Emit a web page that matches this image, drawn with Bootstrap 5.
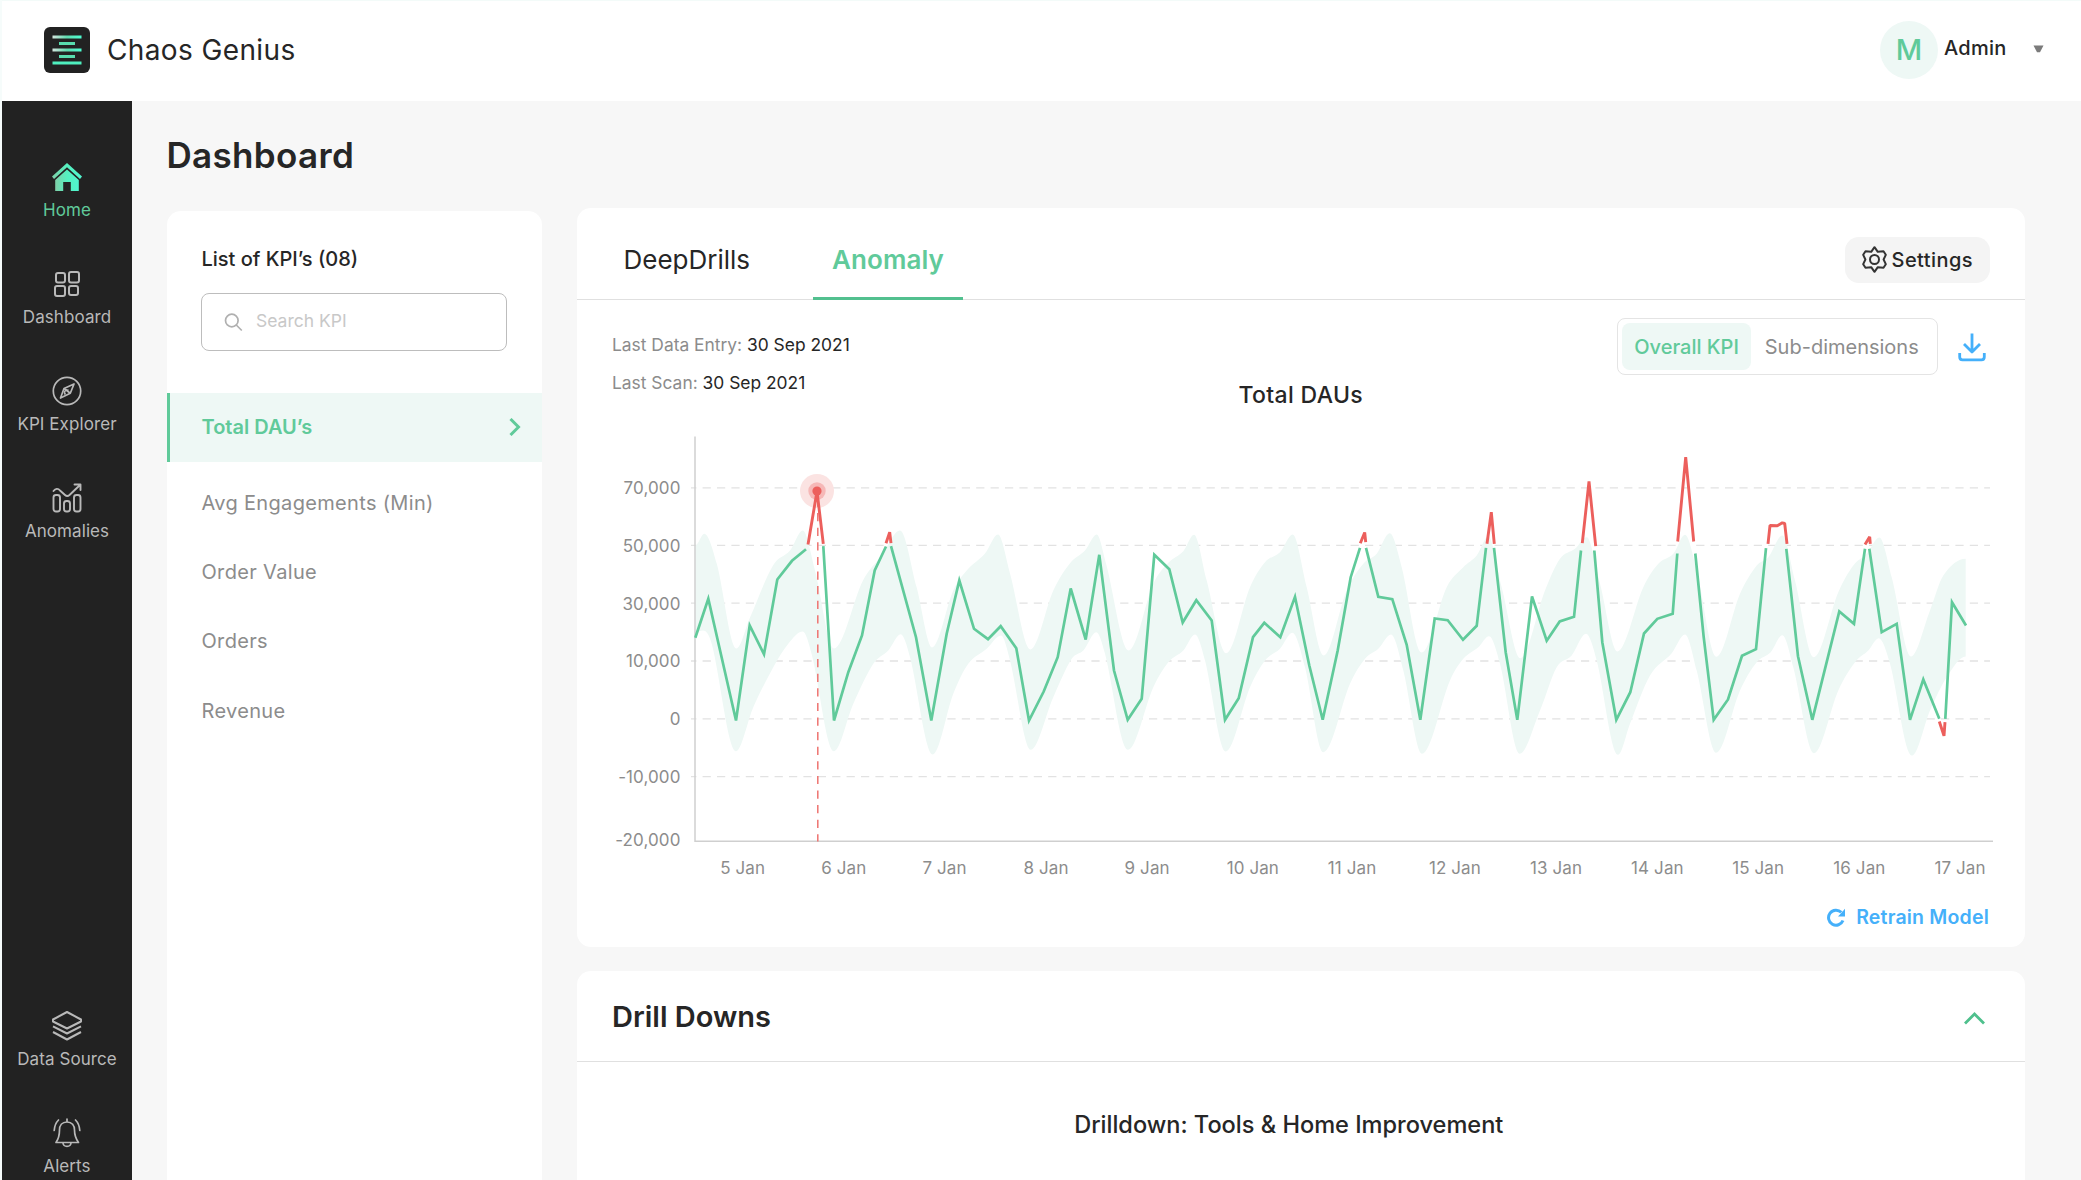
<!DOCTYPE html>
<html lang="en">
<head>
<meta charset="utf-8">
<meta name="viewport" content="width=device-width, initial-scale=1">
<title>Chaos Genius</title>
<link href="https://cdn.jsdelivr.net/npm/bootstrap@5.3.0/dist/css/bootstrap.min.css" rel="stylesheet">
<style>
  :root { --cg-green:#60ca9a; --cg-mint:#eef8f5; --cg-ink:#262626; --cg-gray:#8c8c8c; --cg-blue:#45b0fa; --cg-line:#e0e0e0; }
  body { font-family: Inter, "Liberation Sans", sans-serif; background:#f7f7f7; color:var(--cg-ink); height:1180px; overflow:hidden; border-left:2px solid #f6fcfb; }
  svg { display:block; flex:none; }
  .topbar { height:101px; padding:0 37px 2px 42px; border-top:1px solid #f3fbf9; }
  .brand-name { font-size:28px; line-height:36px; margin-left:17px; letter-spacing:.38px; }
  .avatar { width:58px; height:58px; background:var(--cg-mint); color:var(--cg-green); font-size:29px; font-weight:500; }
  .user-name { font-size:20px; line-height:24px; font-weight:500; margin-left:6px; margin-bottom:4px; letter-spacing:.25px; }
  .user-caret { margin-left:26.5px; margin-bottom:3px; }
  .shell { height:1079px; }
  .sidebar { width:130px; background:#222; padding:61px 0 2px; }
  .side-group { gap:47px; }
  .side-link { color:#b9b9b9; text-decoration:none; font-size:17px; line-height:24px; gap:6px; white-space:nowrap; letter-spacing:.08px; }
  .side-link.active { color:var(--cg-green); }
  .content { padding:33.5px 56.5px 0 34.5px; min-width:0; }
  .page-title { font-size:35px; line-height:40px; font-weight:600; margin:0 0 33px; letter-spacing:.33px; }
  .columns { gap:35px; height:972px; }
  .panel { background:#fff; border-radius:14px; }
  .kpi-panel { width:375.5px; margin-top:3px; padding-top:36px; flex:none; }
  .kpi-title { font-size:20px; line-height:24px; font-weight:500; margin:0 35px; }
  .kpi-search { margin:22.5px 35px 41.8px 34.5px; height:58px; border:1.5px solid #bdbdbd; border-radius:8px; padding:0 22px; color:#c4c4c4; font-size:17.5px; gap:13px; }
  .kpi-search input { border:0; outline:0; padding:0 0 1px; width:220px; background:none; font-size:inherit; color:inherit; }
  .kpi-search input::placeholder { color:#c8c8c8; opacity:1; }
  .kpi-item { height:69.3px; padding:0 21px 0 35px; font-size:20px; color:var(--cg-gray); text-decoration:none; letter-spacing:.33px; }
  .kpi-item.active { background:var(--cg-mint); color:var(--cg-green); font-weight:600; border-left:3px solid var(--cg-green); padding-left:32px; margin-bottom:6px; letter-spacing:0; }
  .main-col { width:1447.5px; gap:23.5px; flex:none; }
  .tabs { height:92.5px; border-bottom:1px solid var(--cg-line); padding:0 35px 0 27.5px; }
  .tab { font-size:26px; line-height:32px; padding:36.5px 19px 0; height:92.5px; color:var(--cg-ink); text-decoration:none; text-align:center; }
  .tab.active { color:var(--cg-green); font-weight:600; border-bottom:3px solid #52c08f; margin-left:44px; letter-spacing:.08px; }
  .btn-settings, .btn-settings:hover { height:46px; width:144.5px; background:#f4f4f4; border-radius:14px; font-size:20px; font-weight:500; padding:0; gap:5px; margin-top:13px; color:var(--cg-ink); letter-spacing:.42px; }
  .meta { padding:18px 35px 0; height:108.5px; }
  .meta-side { flex:1 1 0; min-width:0; }
  .scan-info { font-size:17.4px; line-height:37.5px; padding-top:8px; color:var(--cg-gray); white-space:nowrap; }
  .scan-info b { font-weight:400; color:var(--cg-ink); }
  .chart-title { font-size:23px; line-height:28px; font-weight:500; margin:0; letter-spacing:.35px; }
  .segmented { height:57px; width:320.5px; border:1.5px solid #e4e4e4; border-radius:8px; padding:4px; font-size:20px; color:var(--cg-gray); }
  .segmented .on { background:var(--cg-mint); color:var(--cg-green); border-radius:8px; height:47px; width:129px; font-weight:500; }
  .segmented .off { flex:1; }
  .download { margin:15px 3.5px 0 20.5px; }
  .retrain { color:var(--cg-blue); font-size:19.5px; line-height:24px; font-weight:600; padding:15px 35.5px 18px; gap:11px; letter-spacing:.2px; }
  .drill-head { height:91.5px; border-bottom:1px solid var(--cg-line); padding:2px 40px 0 35px; }
  .drill-head svg { margin-top:3px; }
  .drill-title { font-size:29px; line-height:36px; font-weight:600; margin:0; }
  .drill-sub { font-size:23.55px; line-height:28px; font-weight:500; padding:49px 24px 0 0; text-align:center; margin:0; }
  .axis-label { font-size:17px; fill:#8c8c8c; letter-spacing:.1px; }
</style>
</head>
<body>
<header class="topbar bg-white d-flex align-items-center">
  <svg width="46" height="46" viewBox="0 0 46 46">
    <defs>
      <linearGradient id="gBar" x1="0" x2="1"><stop offset="0" stop-color="#d5e5de"/><stop offset=".5" stop-color="#5fdcb0"/><stop offset="1" stop-color="#4dffd2"/></linearGradient>
      <linearGradient id="gHome" x1="0" x2="1"><stop offset="0" stop-color="#7fcfa8"/><stop offset=".5" stop-color="#55f0bf"/><stop offset="1" stop-color="#50f5d0"/></linearGradient>
    </defs>
    <rect width="46" height="46" rx="6" fill="#222"/>
    <rect x="8.5" y="8.5" width="29" height="3" fill="url(#gBar)"/>
    <rect x="15" y="15" width="16" height="3" fill="#58dcae"/>
    <rect x="8.5" y="21.5" width="29" height="3" fill="url(#gBar)"/>
    <rect x="15" y="28" width="16" height="3" fill="#58dcae"/>
    <rect x="8.5" y="34.5" width="29" height="3" fill="#4ff0bf"/>
  </svg>
  <span class="brand-name">Chaos Genius</span>
  <div class="ms-auto d-flex align-items-center">
    <span class="avatar rounded-circle d-flex align-items-center justify-content-center">M</span>
    <span class="user-name">Admin</span>
    <svg class="user-caret" width="11" height="8" viewBox="0 0 11 8"><path d="M.5.5h10L7 7.2H4z" fill="#7b7b7b"/></svg>
  </div>
</header>

<div class="shell d-flex">
  <nav class="sidebar d-flex flex-column flex-shrink-0">
    <div class="side-group d-flex flex-column">
      <a class="side-link active d-flex flex-column align-items-center" href="#">
        <svg width="32" height="30" viewBox="0 0 32 30" fill="url(#gHome)"><path d="M16 1 31 14.5 29 17 16 5.300 3 17 1 14.500z"/><path d="M16 7.500 27.800 18v11h-8V20h-7.600v9h-8V18z"/></svg>
        <span>Home</span></a>
      <a class="side-link d-flex flex-column align-items-center" href="#">
        <svg width="30" height="30" viewBox="0 0 30 30" fill="none" stroke="#b9b9b9" stroke-width="2"><rect x="4" y="4" width="9" height="9.500" rx="2"/><rect x="17" y="3" width="10" height="10.500" rx="2"/><rect x="3" y="17" width="10" height="10" rx="2"/><rect x="17" y="17" width="9" height="9" rx="2"/></svg>
        <span>Dashboard</span></a>
      <a class="side-link d-flex flex-column align-items-center" href="#">
        <svg width="30" height="30" viewBox="0 0 30 30" fill="none" stroke="#b9b9b9" stroke-width="1.700" stroke-linejoin="round"><circle cx="15" cy="15" r="13.700"/><path d="M22 8 18.300 17.300 8.500 22 12 12.500z"/><path d="M12 12.500 18.300 17.300M13.500 18.500a2.500 2.500 0 1 1 3-4"/></svg>
        <span>KPI Explorer</span></a>
      <a class="side-link d-flex flex-column align-items-center" href="#">
        <svg width="30" height="30" viewBox="0 0 30 30" fill="none" stroke="#b9b9b9" stroke-width="1.900" stroke-linecap="round" stroke-linejoin="round"><rect x="1.500" y="12" width="6.500" height="16.500" rx="2.500"/><rect x="12" y="18" width="6" height="10.500" rx="2.500"/><rect x="22" y="12" width="6.500" height="16.500" rx="2.500"/><path d="M1.500 8c2-2.500 4.500-3 6.500-.5l5 4.500c1.500 1.300 3 1.300 4.500 0L28 2M22.500 1.500H28.500V7"/></svg>
        <span>Anomalies</span></a>
    </div>
    <div class="side-group d-flex flex-column mt-auto">
      <a class="side-link d-flex flex-column align-items-center" href="#">
        <svg width="30" height="30" viewBox="0 0 30 30" fill="none" stroke="#b9b9b9" stroke-width="2" stroke-linejoin="round"><path d="M15 1 29 8.500V10.500L15 17.500 1 10.500V8.500z"/><path d="M1 15.300 15 22.500 29 15.300M1 21 15 28.500 29 21"/></svg>
        <span>Data Source</span></a>
      <a class="side-link d-flex flex-column align-items-center" href="#">
        <svg width="30" height="30" viewBox="0 0 30 30" fill="none" stroke="#b9b9b9" stroke-width="1.700" stroke-linecap="round" stroke-linejoin="round"><path d="M15 1v3M15 4c-5 0-7.500 3.500-7.500 8 0 6-1 9-3.500 12.500h22.500C24 21 22.500 18 22.500 12 22.500 7.500 20 4 15 4z"/><path d="M11 25c.5 4.500 7.500 4.500 8 0M6.500 2C4 4.500 2.500 8 2.200 12.500M23.500 2C26 4.500 27.500 8 27.800 12.500"/></svg>
        <span>Alerts</span></a>
    </div>
  </nav>

  <main class="content flex-grow-1">
    <h1 class="page-title">Dashboard</h1>
    <div class="columns d-flex">
      <aside class="panel kpi-panel rounded-bottom-0">
        <h2 class="kpi-title">List of KPI’s (08)</h2>
        <label class="kpi-search d-flex align-items-center">
          <svg width="19" height="19" viewBox="0 0 19 19" fill="none" stroke="#b0b0b0" stroke-width="1.700"><circle cx="7.800" cy="7.500" r="6.300"/><path d="m12.300 12 5.500 5.500"/></svg>
          <input type="text" placeholder="Search KPI">
        </label>
        <div class="d-flex flex-column">
          <a href="#" class="kpi-item active d-flex align-items-center justify-content-between">Total DAU’s
            <svg width="12" height="18" viewBox="0 0 12 18" fill="none" stroke="#60ca9a" stroke-width="3"><path d="m1.500 1 8 8-8 8"/></svg></a>
          <a href="#" class="kpi-item d-flex align-items-center">Avg Engagements (Min)</a>
          <a href="#" class="kpi-item d-flex align-items-center">Order Value</a>
          <a href="#" class="kpi-item d-flex align-items-center">Orders</a>
          <a href="#" class="kpi-item d-flex align-items-center">Revenue</a>
        </div>
      </aside>

      <div class="main-col d-flex flex-column">
        <section class="panel">
          <div class="tabs d-flex align-items-center">
            <a class="tab" href="#">DeepDrills</a>
            <a class="tab active" href="#">Anomaly</a>
            <button class="btn btn-settings ms-auto d-flex align-items-center justify-content-center">
              <svg width="25" height="27" viewBox="0 0 25 27" fill="none" stroke="#333" stroke-width="2" stroke-linejoin="round"><path d="M12.500 1.200 15.800 5.800 21.500 5.200 23.800 8.800 21.600 13.500 23.800 18.200 21.500 21.800 15.800 21.200 12.500 25.800 9.200 21.200 3.500 21.800 1.200 18.200 3.400 13.500 1.200 8.800 3.500 5.200 9.200 5.800z"/><circle cx="12.500" cy="13.500" r="4.500"/></svg>
              Settings
            </button>
          </div>
          <div class="meta d-flex">
            <div class="meta-side scan-info"><div>Last Data Entry: <b>30 Sep 2021</b></div><div>Last Scan: <b>30 Sep 2021</b></div></div>
            <h3 class="chart-title align-self-end">Total DAUs</h3>
            <div class="meta-side d-flex justify-content-end align-items-start">
              <div class="segmented d-flex align-items-center flex-shrink-0">
                <span class="on d-flex align-items-center justify-content-center">Overall KPI</span>
                <span class="off text-center">Sub-dimensions</span>
              </div>
              <svg class="download" width="28" height="29" viewBox="0 0 28 29" fill="none" stroke="#45b0fa" stroke-width="2.800" stroke-linejoin="round"><path d="M14 .5V18M6 11l8 8 8-8M1.700 20v4q0 2.800 2.800 2.800h19q2.800 0 2.800-2.800v-4"/></svg>
            </div>
          </div>
          <svg id="chart" width="1447" height="481.500" viewBox="577 408.500 1447 481.500"></svg>
          <div class="retrain d-flex align-items-center justify-content-end">
            <svg width="18" height="19" viewBox="0 0 18 19" fill="none" stroke="#45b0fa" stroke-width="3"><path d="M14.300 4.300A7.500 7.500 0 1 0 16 12.500"/><path d="M18 .8V8.500H11z" fill="#45b0fa" stroke="none"/></svg>
            <span>Retrain Model</span>
          </div>
        </section>
        <section class="panel flex-grow-1 rounded-bottom-0">
          <div class="drill-head d-flex align-items-center justify-content-between">
            <h2 class="drill-title">Drill Downs</h2>
            <svg width="21" height="13" viewBox="0 0 21 13" fill="none" stroke="#4fc08d" stroke-width="2.800"><path d="m1 11.500 9.500-9.500 9.500 9.500"/></svg>
          </div>
          <p class="drill-sub">Drilldown: Tools &amp; Home Improvement</p>
        </section>
      </div>
    </div>
  </main>
</div>

<script src="https://cdn.jsdelivr.net/npm/bootstrap@5.3.0/dist/js/bootstrap.bundle.min.js"></script>
<script>
const upper = "695.3,545 704.3,533.3 716.7,563 736.3,648 750,617 773,565 790,550 802.7,530 815,570 834,648 863,580 881.7,555 900,530 916.7,587 932,647 953.3,590 966.7,570 985,553 998,534 1010,573 1030.3,649 1053.3,590 1070,562.7 1085,550 1096.7,534 1106,563 1128.7,650 1153.3,583.3 1168.3,562.3 1183.3,550.7 1194,534.3 1206.7,580 1226,652.7 1250,586.7 1265,561.7 1280,551.7 1292.7,534 1306.7,586.7 1323.7,655 1346.7,590 1363.3,563.3 1376.7,553.3 1389.7,532.7 1401.7,566.7 1421.7,652 1446.7,586.7 1463.3,566.7 1476.7,555 1488.3,536 1501.7,586.7 1520.3,657.7 1545,590 1560,558.3 1575,548.3 1586.7,536.7 1600,583.3 1617.3,651 1643.3,586.7 1658.3,563.3 1673.3,553.3 1685,534.3 1696.7,570 1716.3,656.3 1740,593.3 1756.7,565 1768.3,556.7 1782.3,535 1795,580 1813.7,656.7 1838.3,591.7 1853.3,565 1866.7,553.3 1879.3,537 1891.7,576.7 1911,656 1930,610 1943.3,575 1965.7,558.3";
const lower = "695.3,631.7 703,630 711.7,643.3 736,750.7 753.3,706.7 773.3,666.7 788.3,643.3 802.7,631 812,655 834,750.7 853.3,703.3 873.3,663.3 888.3,650 900.7,633.7 910,656.7 932.7,754 953.3,693.3 968.3,663.3 986.7,648.3 1001,635 1010,660 1030.7,749.3 1053.3,696.7 1071.7,658.3 1083.3,650 1096.3,631.7 1105,653.3 1128,749.3 1153.3,686.7 1168.3,661.7 1183.3,650 1195,634 1205,660 1225.7,751 1250,686.7 1265,660 1280,648.3 1292.3,632.3 1305,666.7 1323.3,751.7 1350,683.3 1365,658.3 1378.3,648.3 1391,634 1403.3,670 1422,753.3 1450,680 1463.3,658.3 1478.3,646.7 1489,635.7 1500,663.3 1519.7,753.3 1540,710 1556.7,666.7 1571.7,655 1586,633.3 1596.7,660 1618,754.3 1630,723.3 1650,675 1671.7,652.7 1685,634 1696.7,670 1716,752.3 1740,690 1756.7,661.7 1770.7,651.7 1782.3,634.7 1793.3,666.7 1814,752.7 1838.3,690 1855,661.7 1868.3,650 1878.7,637.7 1890,663.3 1912,755 1930,710 1946.7,676.7 1965.7,656";
const normal = [
 "695.3,637.3 708.3,598.3 736,720 749.7,625 764,653.7 777.3,579 792,560.3 806,548.7",
 "823.3,545.7 834,720 848.3,671.7 862,635 874.7,570 886,546",
 "891,545.7 916,636.7 931.3,720 946.7,633.3 959.3,580 974,628.3 988,638.7 1000.7,625.7 1016.3,647.7 1029,720 1043.7,691 1057.7,656.7 1070.7,588 1085.7,639 1099.3,554.3 1114,670 1127.7,719.3 1141.7,698.3 1154.3,554.3 1169.3,568.7 1182.7,622 1196.3,599.7 1211.7,620 1225,719.3 1238.7,697.7 1253,636.7 1264.3,622.3 1280.3,636.7 1295,596.3 1309.3,665 1322.7,719.3 1337.7,650 1350.7,576.7 1360,547.3",
 "1366,547.3 1378.3,596.3 1392.3,598.7 1406.7,644.3 1420.3,719.3 1434.7,618 1447.7,619.7 1463,639.3 1476.7,625.3 1486,547.3",
 "1494,547.3 1505.7,651.7 1517.3,719.3 1532,596 1546.7,640.3 1559.7,621 1574,616.3 1581,550",
 "1594.3,550 1602.3,641.7 1616.3,719.3 1630.3,691.7 1644,633 1657.3,618.3 1672.7,613.3 1677.3,553",
 "1695.3,553 1703.7,636.7 1713.7,719.3 1728,699 1742,655.3 1756,648.7 1766,547.7",
 "1786.3,548.3 1798,655.7 1812.3,719.3 1839.3,611 1854,623.3 1865,548.3",
 "1869.3,548.3 1881.7,631.7 1896.7,623.3 1910,719.3 1923.3,679 1939.3,718.3",
 "1945.3,718.3 1952,601.7 1966,625"];
const anomalies = [
 "808,544 817,490.7 823.3,543.3", "886,542.7 889.7,531.7 891,542.7", "1360.3,542.7 1364.7,532 1365.7,541.7",
 "1487,543.3 1491.3,511.7 1494.3,543.3", "1582.3,542.7 1589,481 1595.7,545.7", "1677.7,541 1685.7,456.7 1693.7,541",
 "1768,543.3 1770,525 1777.3,525.3 1782.3,522.3 1784.7,523 1787,543.3", "1865,544 1869.7,536.3 1870.3,543.3",
 "1939.3,721 1944,735.3 1945,721.7"];
const parse = s => s.split(" ").map(p => p.split(",").map(Number));
// Smooth curve through the points, flat at every local extreme
function curve(pts) {
  const slope = pts.map((p, i) => {
    if (!i || i === pts.length - 1) return 0;
    const a = pts[i-1], b = pts[i+1];
    if ((p[1]-a[1]) * (b[1]-p[1]) <= 0) return 0;
    return (b[1]-a[1]) / (b[0]-a[0]);
  });
  let d = "";
  for (let i = 1; i < pts.length; i++) {
    const a = pts[i-1], b = pts[i], h = (b[0]-a[0]) / 3;
    d += `C${a[0]+h} ${a[1]+slope[i-1]*h} ${b[0]-h} ${b[1]-slope[i]*h} ${b[0]} ${b[1]}`;
  }
  return d;
}
const up = parse(upper), lo = parse(lower).reverse();
// The lower edge is traced right to left to close the band
let out = "";
[487.3,544.9,602.7,660.5,718.3,776.2].forEach(y => out += `<path d="M691 ${y}H1990" stroke="#e2e2e2" stroke-width="1.3" stroke-dasharray="8.2 6.2" stroke-dashoffset="2.8"/>`);
out += `<path d="M${up[0]}${curve(up)}L${lo[0]}${curve(lo)}Z" fill="#eef8f5"/>`;
out += `<path d="M695 436V840.700H1993" fill="none" stroke="#cfcfcf" stroke-width="1.5"/>`;
out += `<circle cx="817" cy="490.5" r="17" fill="#fbe3e2"/><circle cx="817" cy="490.5" r="8.7" fill="#f6b8b7"/>`;
out += `<path d="M817.8 498V841" stroke="#ee7370" stroke-width="1.5" stroke-dasharray="8.2 6.4"/>`;
normal.forEach(p => out += `<polyline points="${p}" fill="none" stroke="#60ca9a" stroke-width="2.7"/>`);
anomalies.forEach(p => out += `<polyline points="${p}" fill="none" stroke="#ec5f5c" stroke-width="2.9" stroke-linejoin="bevel"/>`);
out += `<circle cx="817" cy="490.5" r="4.6" fill="#ec5f5c"/>`;
[["70,000",493.5],["50,000",551.2],["30,000",609],["10,000",666.8],["0",724.6],["-10,000",782.4],["-20,000",845.6]]
  .forEach(([t,y]) => out += `<text class="axis-label" x="680.5" y="${y}" text-anchor="end">${t}</text>`);
for (let i = 0; i < 13; i++) out += `<text class="axis-label" x="${720.2 + 101.1*i + (i > 4 ? 1 : 0)}" y="873">${5+i} Jan</text>`;
document.getElementById("chart").innerHTML = out;
</script>
</body>
</html>
